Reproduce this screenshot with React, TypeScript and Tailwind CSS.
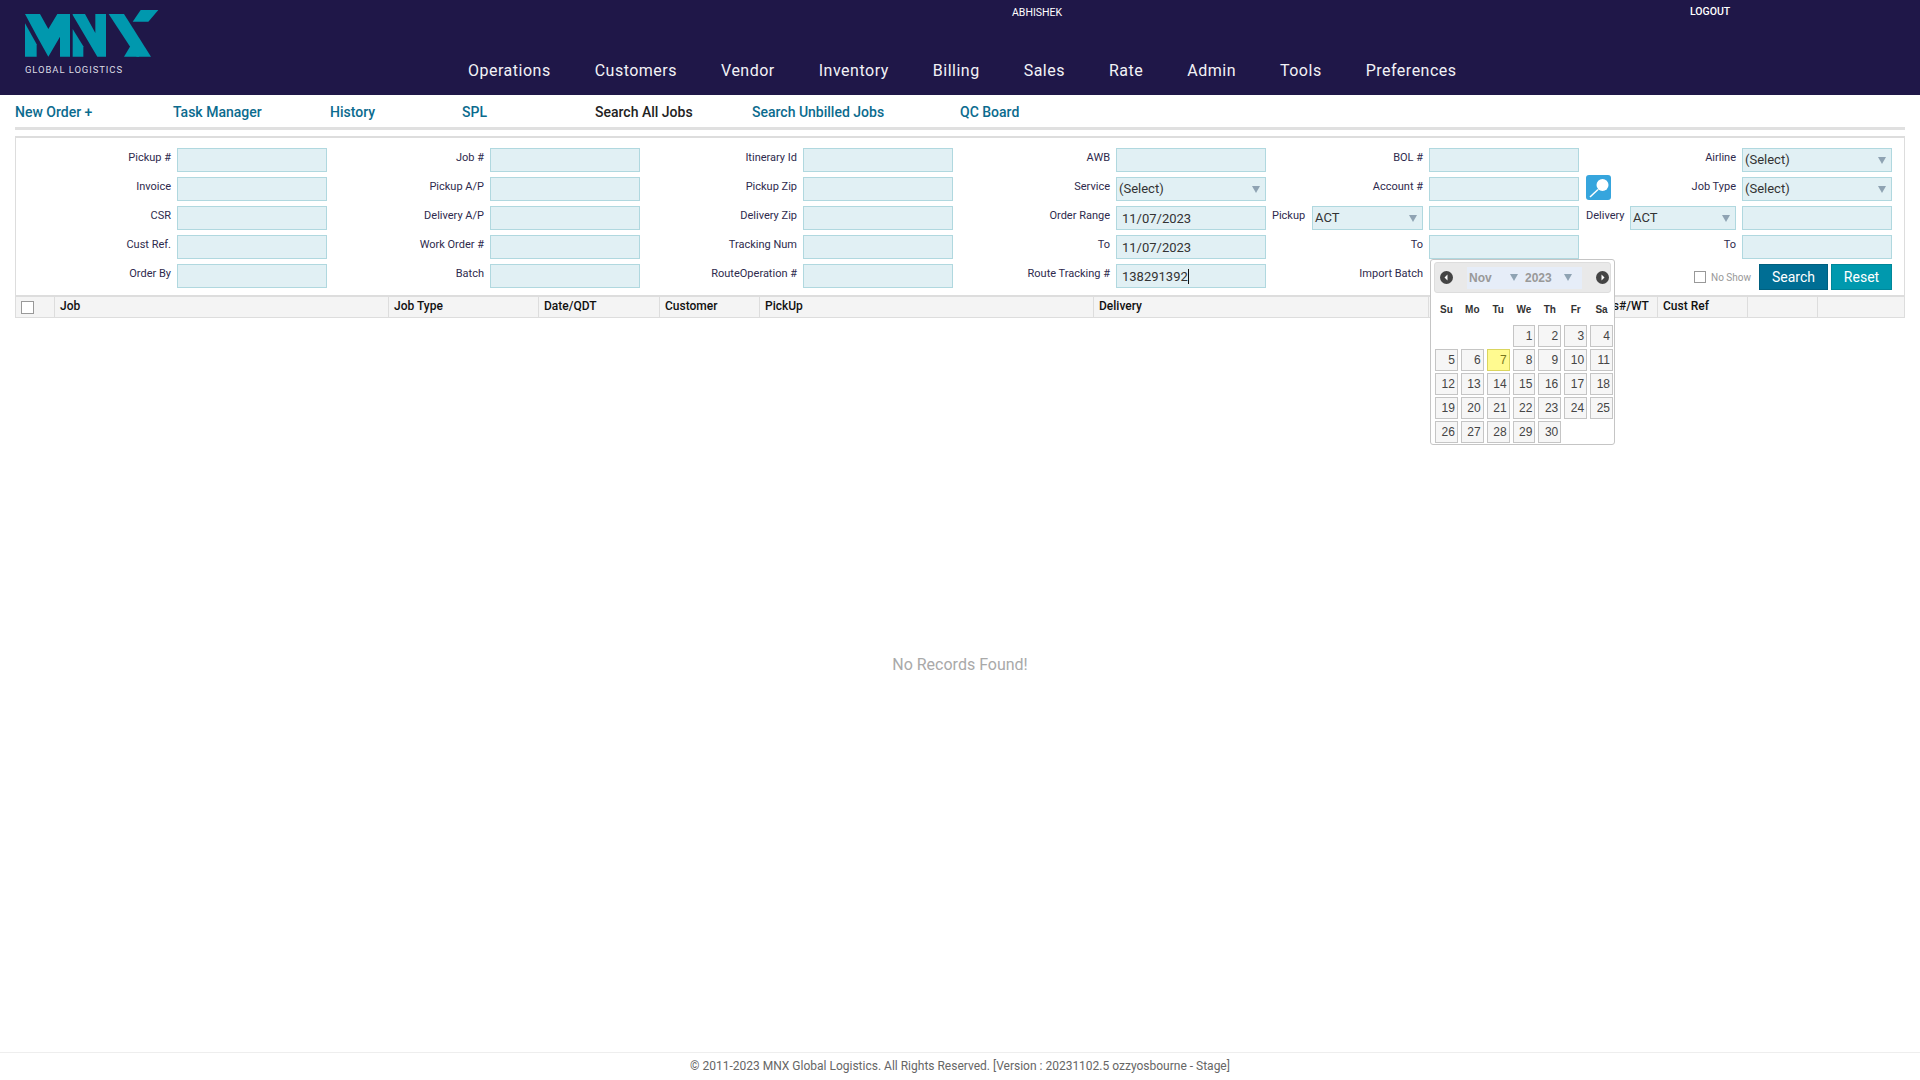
import * as React from 'react'

const navItems = ['Operations', 'Customers', 'Vendor', 'Inventory', 'Billing', 'Sales', 'Rate', 'Admin', 'Tools', 'Preferences']

const subNav = [
  {label: 'New Order +', width: 'w-[158px]'},
  {label: 'Task Manager', width: 'w-[157px]'},
  {label: 'History', width: 'w-[132px]'},
  {label: 'SPL', width: 'w-[133px]'},
  {label: 'Search All Jobs', width: 'w-[157px]', active: true},
  {label: 'Search Unbilled Jobs', width: 'w-[208px]'},
  {label: 'QC Board', width: 'w-[120px]'},
]

const columns = [
  {label: 'Job', width: 'w-[334px]'},
  {label: 'Job Type', width: 'w-[150px]'},
  {label: 'Date/QDT', width: 'w-[121px]'},
  {label: 'Customer', width: 'w-[100px]'},
  {label: 'PickUp', width: 'w-[334px]'},
  {label: 'Delivery', width: 'w-[335px]'},
  {label: 'Status', width: 'w-[165px]'},
  {label: 'Pcs#/WT', width: 'w-[64px]'},
  {label: 'Cust Ref', width: 'w-[90px]'},
  {label: '', width: 'w-[70px]'},
  {label: '', width: 'w-[87px]'},
]

const weekDays = ['Su', 'Mo', 'Tu', 'We', 'Th', 'Fr', 'Sa']
const days = Array.from({length: 30}, (_, i) => i + 1)

const Label = ({children}: {children?: React.ReactNode}) => (
  <div className="h-[20px] leading-[20px] text-[11px] text-right text-[#2e2a4d] whitespace-nowrap">{children}</div>
)

const Caret = () => (
  <svg width="10" height="9" viewBox="0 0 10 9" className="shrink-0">
    <polygon points="1,1 9,1 5,8" fill="#8fa3b3" />
  </svg>
)

const Input = ({value, caret}: {value?: string; caret?: boolean}) => (
  <div className="h-[24px] w-[150px] bg-[#e1f0f4] border border-[#b0d8df] pl-[5px] pt-[1px] leading-[22px] text-[13px] text-[#333]">
    {caret ? <span className="border-r border-[#111] pr-0">{value}</span> : value}
  </div>
)

const Select = ({value, width = 'w-[150px]'}: {value: string; width?: string}) => (
  <div className={`h-[24px] ${width} bg-[#e1f0f4] border border-[#b0d8df] pl-[2px] pr-[4px] flex items-center justify-between text-[13px] text-[#333]`}>
    <span>{value}</span>
    <Caret />
  </div>
)

const Logo = () => (
  <svg width="145" height="60" viewBox="0 0 435 180" className="block">
    <g fill="#0098ae">
      <polygon points="15,55 50,118 50,155 15,155" />
      <polygon points="15,27 60,27 85,72 112,27 150,27 150,155 120,155 120,95 85,155 50,92" />
      <polygon points="158,27 195,27 226,84 226,27 258,27 258,155 232,155 158,30" />
      <polygon points="158,72 190,124 190,155 158,155" />
      <polygon points="266,27 312,27 393,155 350,155" />
      <polygon points="362,15 415,15 385,50 338,50" />
      <polygon points="312,155 337,113 358,155" />
    </g>
  </svg>
)

const SearchIcon = () => (
  <svg width="25" height="25" viewBox="0 0 25 25" className="block shrink-0">
    <rect width="25" height="25" rx="3" fill="#36a5dd" />
    <circle cx="16.5" cy="10" r="6" fill="#fff" />
    <line x1="12" y1="14.5" x2="4" y2="22" stroke="#fff" strokeWidth="1.5" />
  </svg>
)

const Arrow = ({left}: {left?: boolean}) => (
  <svg width="13" height="13" viewBox="0 0 13 13" className="block shrink-0">
    <circle cx="6.5" cy="6.5" r="6.5" fill="#444" />
    <polygon points={left ? '7.5,3.5 7.5,9.5 4.5,6.5' : '5.5,3.5 5.5,9.5 8.5,6.5'} fill="#fff" />
  </svg>
)

const Calendar = () => (
  <div className="absolute left-[1px] top-[-5px] z-10 w-[185px] h-[186px] bg-white border border-[#c5c5c5] rounded-[3px] px-[3px] pt-[2px] font-['Liberation_Sans',sans-serif]">
    <div className="h-[31px] bg-[#e9e9e9] border border-[#ddd] rounded-[3px] flex items-center pl-[5px]">
      <Arrow left />
      <div className="ml-[14px] w-[115px] h-[22px] bg-[#e6edf8] flex items-center text-[12px] font-bold text-[#999] pl-[2px]">
        <span className="w-[40px]">Nov</span>
        <Caret />
        <span className="ml-[6px] w-[38px]">2023</span>
        <Caret />
      </div>
      <div className="ml-[14px]">
        <Arrow />
      </div>
    </div>
    <div className="grid grid-cols-7 w-[178px] gap-x-[3px] ml-[1px] mt-[5px] h-[22px] items-center text-center text-[10px] font-bold text-[#333]">
      {weekDays.map(d => (
        <span key={d}>{d}</span>
      ))}
    </div>
    <div className="grid grid-cols-7 w-[178px] gap-x-[3px] gap-y-[2px] ml-[1px] mt-[5px]">
      <div className="col-span-3" />
      {days.map(d => (
        <div
          key={d}
          className={
            d === 7
              ? 'h-[22px] bg-[#fffa90] border border-[#dad55e] text-[#777620] text-right pr-[2px] text-[12px] leading-[20px]'
              : 'h-[22px] bg-[#f6f6f6] border border-[#c5c5c5] text-[#454545] text-right pr-[2px] text-[12px] leading-[20px]'
          }
        >
          {d}
        </div>
      ))}
    </div>
  </div>
)

const SearchForm = () => (
  <div className="grid grid-cols-[repeat(6,151px_150px)] gap-x-[6px] gap-y-[5px] items-start pl-[4px] pt-[10px] pb-[5px]">
    <Label>Pickup #</Label>
    <Input />
    <Label>Job #</Label>
    <Input />
    <Label>Itinerary Id</Label>
    <Input />
    <Label>AWB</Label>
    <Input />
    <Label>BOL #</Label>
    <Input />
    <Label>Airline</Label>
    <Select value="(Select)" />

    <Label>Invoice</Label>
    <Input />
    <Label>Pickup A/P</Label>
    <Input />
    <Label>Pickup Zip</Label>
    <Input />
    <Label>Service</Label>
    <Select value="(Select)" />
    <Label>Account #</Label>
    <Input />
    <div className="flex justify-between items-start">
      <div className="mt-[-2px] ml-[1px]">
        <SearchIcon />
      </div>
      <Label>Job Type</Label>
    </div>
    <Select value="(Select)" />

    <Label>CSR</Label>
    <Input />
    <Label>Delivery A/P</Label>
    <Input />
    <Label>Delivery Zip</Label>
    <Input />
    <Label>Order Range</Label>
    <Input value="11/07/2023" />
    <div className="flex justify-between items-start">
      <Label>Pickup</Label>
      <Select value="ACT" width="w-[111px]" />
    </div>
    <Input />
    <div className="flex justify-between items-start pl-[1px]">
      <Label>Delivery</Label>
      <Select value="ACT" width="w-[106px]" />
    </div>
    <Input />

    <Label>Cust Ref.</Label>
    <Input />
    <Label>Work Order #</Label>
    <Input />
    <Label>Tracking Num</Label>
    <Input />
    <Label>To</Label>
    <Input value="11/07/2023" />
    <Label>To</Label>
    <Input />
    <Label>To</Label>
    <Input />

    <Label>Order By</Label>
    <Input />
    <Label>Batch</Label>
    <Input />
    <Label>RouteOperation #</Label>
    <Input />
    <Label>Route Tracking #</Label>
    <Input value="138291392" caret />
    <Label>Import Batch</Label>
    <div className="relative h-[24px]">
      <Calendar />
    </div>
    <div className="col-span-2 flex justify-end items-center h-[26px]">
      <span className="w-[12px] h-[12px] bg-white border border-[#999]" />
      <span className="ml-[5px] text-[10px] text-[#999]">No Show</span>
      <button type="button" className="ml-[8px] w-[69px] h-[26px] bg-[#006e94] border border-[#00607f] text-white text-[14px]">
        Search
      </button>
      <button type="button" className="ml-[3px] w-[61px] h-[26px] bg-[#0099ae] border border-[#00879a] text-white text-[14px]">
        Reset
      </button>
    </div>
  </div>
)

export default function App() {
  return (
    <div className="min-h-screen flex flex-col bg-white font-['Roboto',sans-serif]">
      <header className="h-[95px] shrink-0 bg-[#1f1748] flex text-white">
        <div className="w-[468px] pl-[20px] pt-[5px] shrink-0">
          <Logo />
          <div className="pl-[5px] mt-[-1px] text-[9.5px] leading-[12px] tracking-[0.9px] text-[#dcdce4]">GLOBAL LOGISTICS</div>
        </div>
        <div>
          <div className="h-[26px] flex items-start">
            <span className="ml-[544px] w-[678px] mt-[6px] text-[10.5px] leading-[14px]">ABHISHEK</span>
            <span className="mt-[5px] text-[10.5px] font-medium leading-[14px]">LOGOUT</span>
          </div>
          <nav className="mt-[33px] flex gap-[44px] text-[16px] leading-[24px] tracking-[0.5px] text-[#f2f2f6]">
            {navItems.map(item => (
              <a key={item}>{item}</a>
            ))}
          </nav>
        </div>
      </header>

      <div className="mx-[15px] h-[35px] shrink-0 border-b-[3px] border-[#e0e0e0] flex items-center text-[14px] font-medium pt-[2px]">
        {subNav.map(item => (
          <a key={item.label} className={`${item.width} ${item.active ? 'text-[#222]' : 'text-[#0b6b8e]'}`}>
            {item.label}
          </a>
        ))}
      </div>

      <div className="mx-[15px] mt-[6px] shrink-0 border border-[#ddd] border-b-0 border-t-2">
        <SearchForm />
      </div>

      <div className="mx-[15px] shrink-0 h-[23px] flex bg-[#f4f4f4] border-t-2 border-b border-[#ddd] text-[12px] font-medium text-[#111]">
        <div className="w-[40px] border-r border-l border-[#ddd] pl-[5px] flex items-center">
          <span className="w-[13px] h-[13px] bg-white border border-[#999]" />
        </div>
        {columns.map((col, i) => (
          <div key={i} className={`${col.width} border-r border-[#ddd] pl-[5px] leading-[19px] whitespace-nowrap`}>
            {col.label}
          </div>
        ))}
      </div>

      <main className="flex-1 pt-[335px] text-center text-[16px] leading-[24px] text-[#a9a9a9]">No Records Found!</main>

      <footer className="h-[28px] shrink-0 border-t border-[#eee] text-center text-[12px] leading-[27px] text-[#666]">
        © 2011-2023 MNX Global Logistics. All Rights Reserved. [Version : 20231102.5 ozzyosbourne - Stage]
      </footer>
    </div>
  )
}
